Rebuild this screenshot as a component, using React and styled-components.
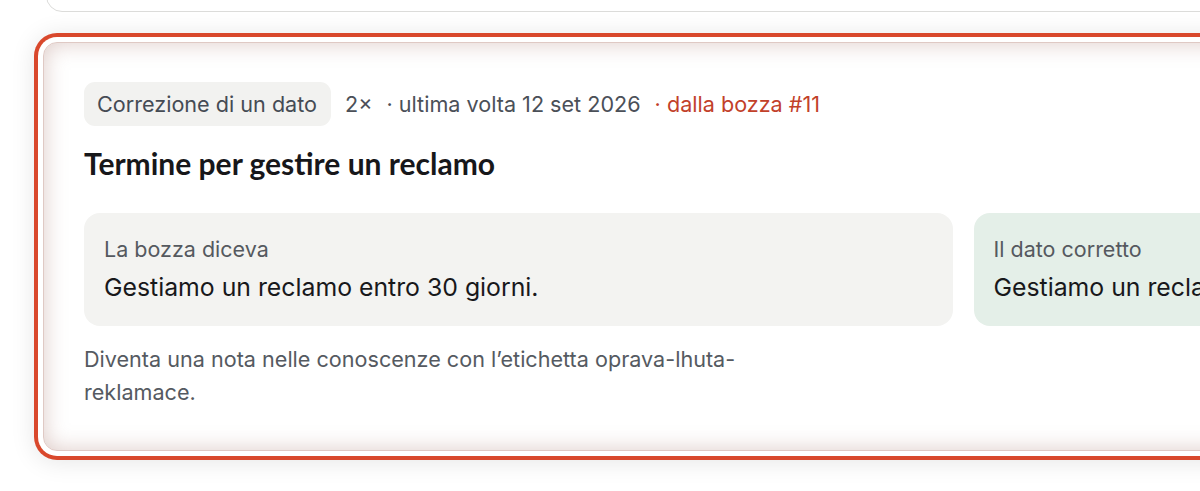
import React from "react";
import styled, { createGlobalStyle } from "styled-components";

const Global = createGlobalStyle`
  html, body {
    margin: 0;
    padding: 0;
    background: #ffffff;
    overflow: hidden;
  }
  body {
    font-family: Inter, "Noto Sans", sans-serif;
    -webkit-font-smoothing: antialiased;
  }
`;

const Viewport = styled.div`
  width: 1200px;
  height: 491px;
  overflow: hidden;
`;

const List = styled.div`
  display: flex;
  flex-direction: column;
  gap: 30px;
  margin-top: -70px;
`;

const PrevCard = styled.div`
  margin-left: 46px;
  width: 1840px;
  height: 80px;
  border: 1px solid #dcdcda;
  border-radius: 16px;
  background: #fff;
  flex-shrink: 0;
`;

const Card = styled.section`
  margin-left: 43px;
  width: 1840px;
  box-sizing: border-box;
  padding: 39px 40px 41px;
  border: 1px solid #dfc9c4;
  border-radius: 14px;
  background: #fff;
  flex-shrink: 0;
  box-shadow:
    inset 0 0 22px rgba(165, 115, 105, 0.38),
    0 0 0 5px #ffffff,
    0 0 0 9px #d9482c,
    0 2px 24px 9px rgba(0, 0, 0, 0.1);
  display: flex;
  flex-direction: column;
`;

const Meta = styled.div`
  display: flex;
  align-items: center;
  gap: 14px;
  font-size: 21.6px;
  line-height: 26px;
  color: #4b5058;
`;

const Chip = styled.span`
  background: #f2f2f0;
  border-radius: 11px;
  padding: 9px 14px 9px 13px;
  color: #454b54;
`;

const MetaItem = styled.span`
  color: ${(p) => (p.accent ? "#c2412a" : "#4b5058")};
`;

const Title = styled.h2`
  margin: 19px 0 0;
  font-family: Lato, "Noto Sans", sans-serif;
  font-weight: 700;
  font-size: 30px;
  line-height: 36px;
  color: #17171a;
`;

const Compare = styled.div`
  display: grid;
  grid-template-columns: 1fr 1fr;
  gap: 21px;
  margin-top: 32px;
`;

const Panel = styled.div`
  background: ${(p) => (p.fixed ? "#e4efe8" : "#f3f3f1")};
  border-radius: 16px;
  padding: 22px 20px 23px;
  display: flex;
  flex-direction: column;
  gap: 8px;
`;

const PanelLabel = styled.div`
  font-size: 21.5px;
  line-height: 28px;
  color: #55595f;
`;

const PanelValue = styled.div`
  font-size: 24.8px;
  line-height: 32px;
  color: #18181b;
`;

const Note = styled.p`
  margin: 17px 0 0;
  max-width: 700px;
  font-size: 21.6px;
  line-height: 33px;
  color: #555a61;
`;

export default function App() {
  return (
    <>
      <Global />
      <Viewport>
        <List>
          <PrevCard />
          <Card>
            <Meta>
              <Chip>Correzione di un dato</Chip>
              <MetaItem>2×</MetaItem>
              <MetaItem>· ultima volta 12 set 2026</MetaItem>
              <MetaItem accent>· dalla bozza #11</MetaItem>
            </Meta>
            <Title>Termine per gestire un reclamo</Title>
            <Compare>
              <Panel>
                <PanelLabel>La bozza diceva</PanelLabel>
                <PanelValue>Gestiamo un reclamo entro 30 giorni.</PanelValue>
              </Panel>
              <Panel fixed>
                <PanelLabel>Il dato corretto</PanelLabel>
                <PanelValue>Gestiamo un reclamo entro 45 giorni.</PanelValue>
              </Panel>
            </Compare>
            <Note>
              Diventa una nota nelle conoscenze con l’etichetta
              oprava-lhuta-reklamace.
            </Note>
          </Card>
        </List>
      </Viewport>
    </>
  );
}
